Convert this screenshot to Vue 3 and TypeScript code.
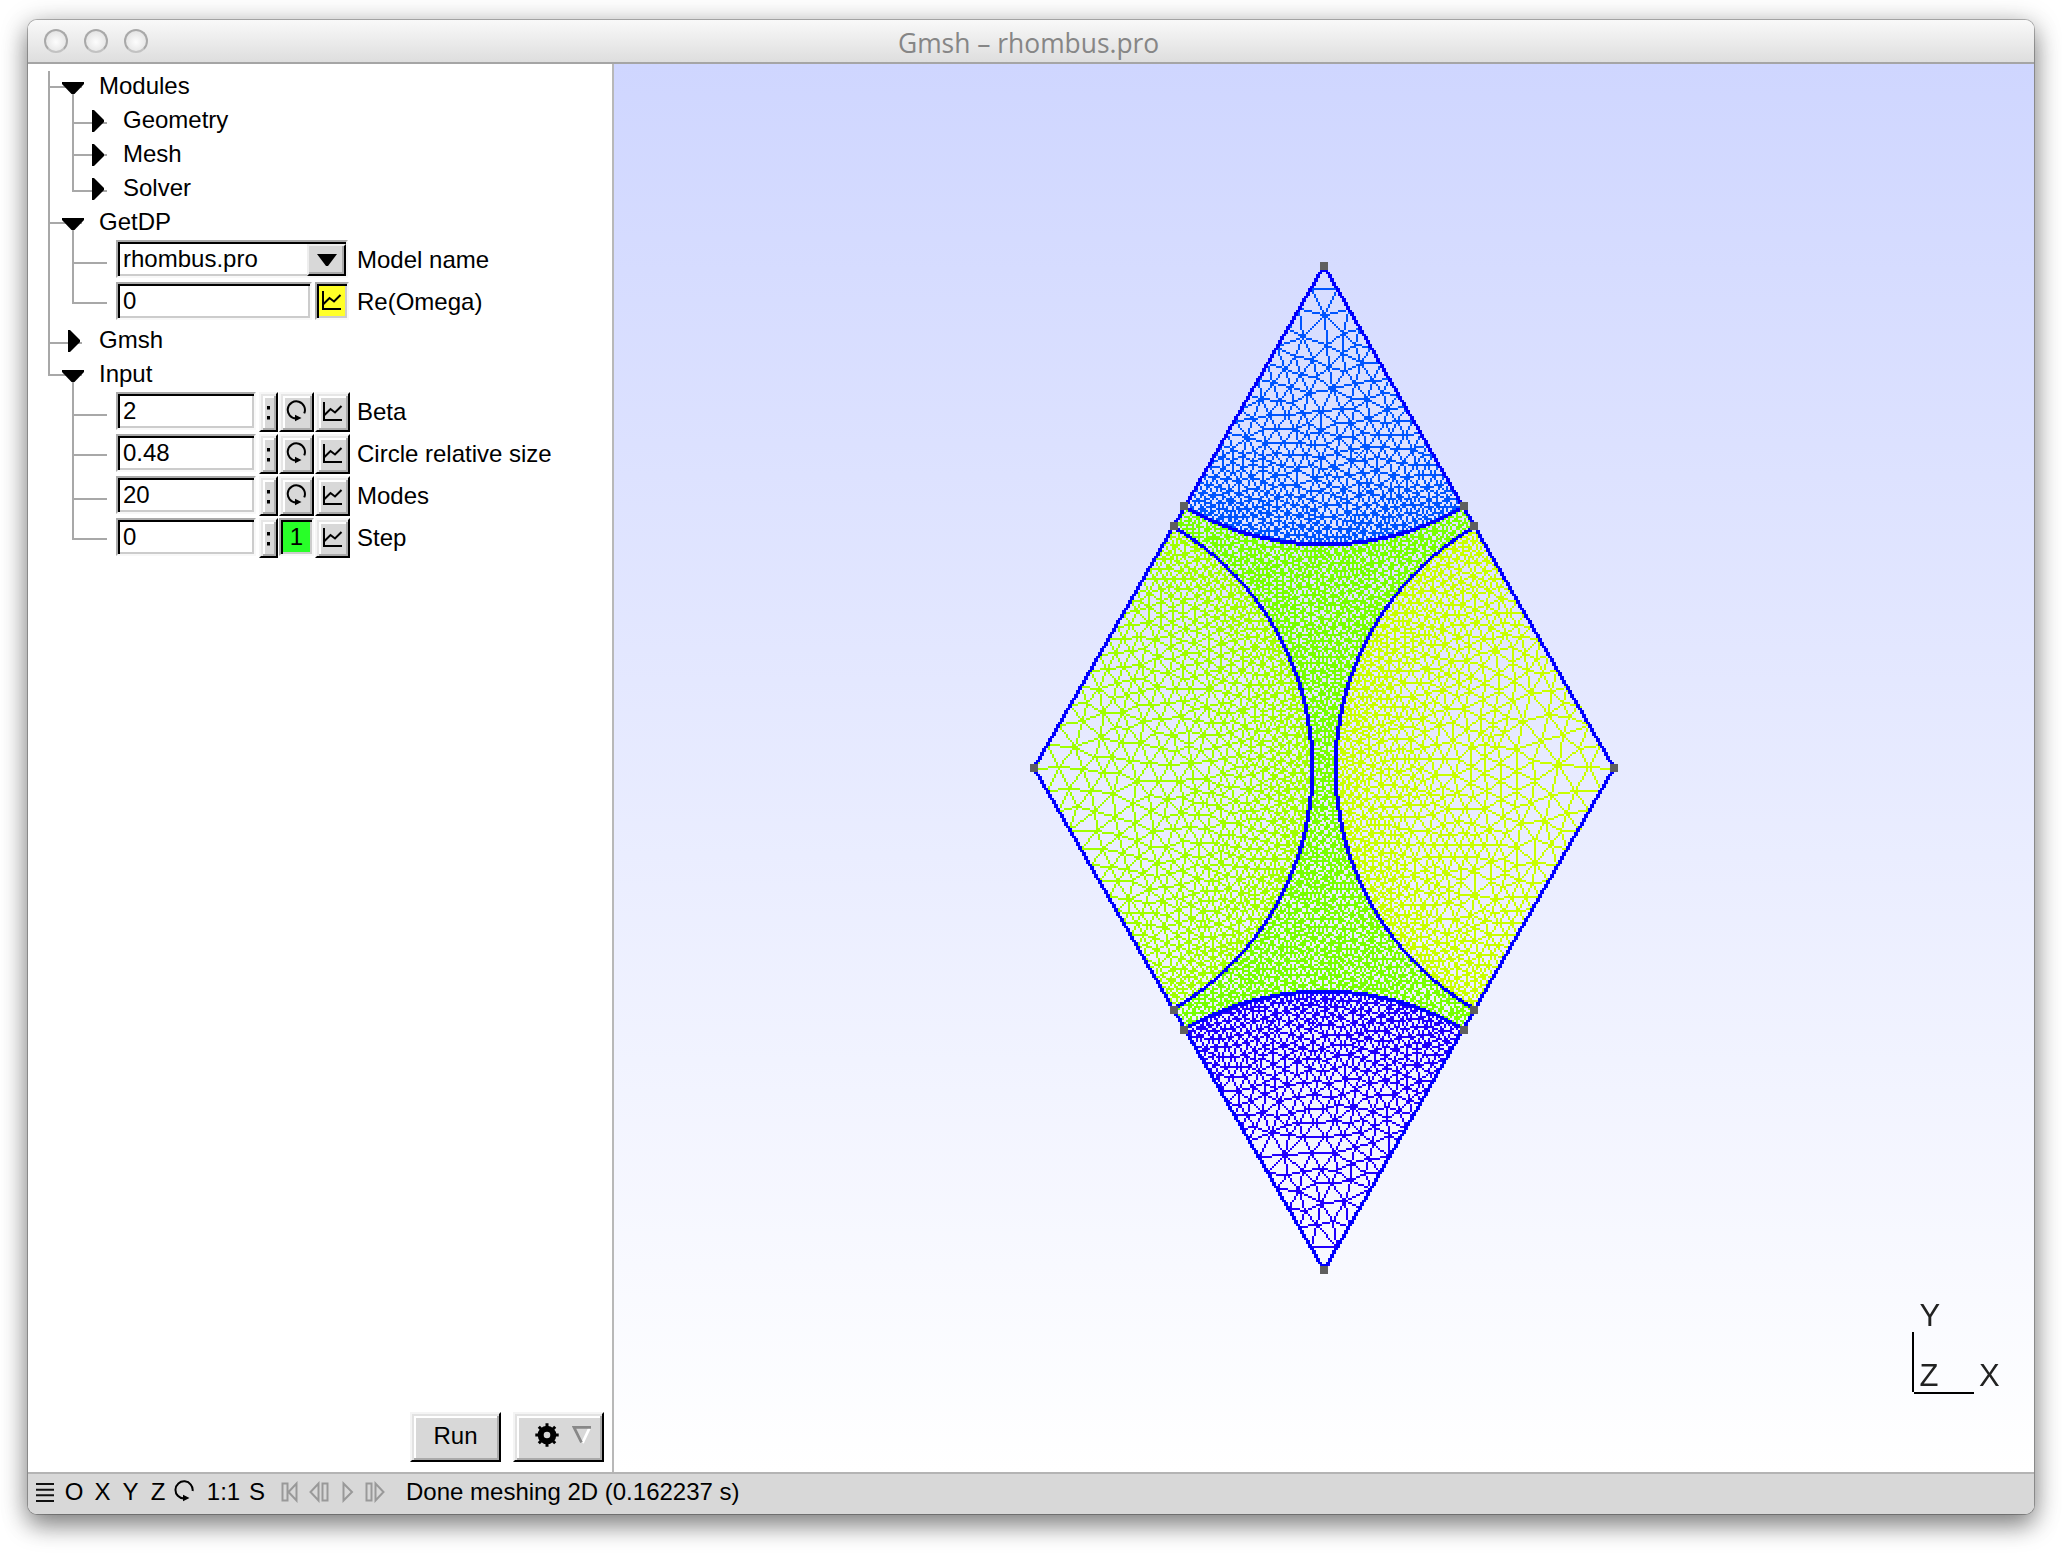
<script setup lang="ts">
import { onMounted, ref } from 'vue'

interface Param {
  value: string
  label: string
  kind: 'combo' | 'graph' | 'loop' | 'step'
}
interface Row {
  title?: string
  depth?: number
  open?: boolean
  param?: Param
}

const rows: Row[] = [
  { title: 'Modules', depth: 0, open: true },
  { title: 'Geometry', depth: 1 },
  { title: 'Mesh', depth: 1 },
  { title: 'Solver', depth: 1 },
  { title: 'GetDP', depth: 0, open: true },
  { param: { value: 'rhombus.pro', label: 'Model name', kind: 'combo' } },
  { param: { value: '0', label: 'Re(Omega)', kind: 'graph' } },
  { title: 'Gmsh', depth: 0 },
  { title: 'Input', depth: 0, open: true },
  { param: { value: '2', label: 'Beta', kind: 'loop' } },
  { param: { value: '0.48', label: 'Circle relative size', kind: 'loop' } },
  { param: { value: '20', label: 'Modes', kind: 'loop' } },
  { param: { value: '0', label: 'Step', kind: 'step' } },
]

// Tree connectors, relative to the tree's top left corner
const connectors = [
  'M21 1V306', 'M45 18V122', 'M45 154V234', 'M45 306V470',
  'M20 17H54', 'M44 53H79', 'M44 85H79', 'M44 121H79', 'M20 153H54',
  'M44 193H79', 'M44 233H79', 'M20 273H54', 'M20 305H54',
  'M44 345H79', 'M44 385H79', 'M44 429H79', 'M44 469H79',
].join('')

// ---- Mesh ----
type Pt = [number, number]
const W = 710
const H = 704
const C: Pt = [355, 352]
const HX = 145
const HY = 251
const R = 139.2
const TOP: Pt = [C[0], C[1] - HY]
const BOTTOM: Pt = [C[0], C[1] + HY]
const LEFT: Pt = [C[0] - HX, C[1]]
const RIGHT: Pt = [C[0] + HX, C[1]]
const FINE = 3.8
const COARSE = 12.8
const vertices: Pt[] = [TOP, RIGHT, BOTTOM, LEFT]
const colors = ['#0055ff', '#c8ff00', '#2000ff', '#a0ff00', '#78ff00']

let seed = 48271
const rnd = () => {
  seed = (seed * 16807) % 2147483647
  return seed / 2147483647
}
const dist = (a: Pt, b: Pt) => Math.hypot(a[0] - b[0], a[1] - b[1])
const region = (p: Pt) => {
  for (let i = 0; i < 4; i++) if (dist(p, vertices[i]) < R) return i
  return 4
}
const size = (p: Pt) => {
  let d = R
  for (const v of vertices) d = Math.min(d, dist(p, v))
  return COARSE + ((FINE - COARSE) * d) / R
}

// Incremental Delaunay triangulation over points sorted by x
function delaunay(pts: Pt[]): [number, number, number][] {
  const n = pts.length
  const order = pts.map((_, i) => i).sort((a, b) => pts[a][0] - pts[b][0])
  const all: Pt[] = pts.concat([[-6000, -4000], [355, 9000], [7000, -4000]])
  interface Tri { a: number; b: number; c: number; x: number; y: number; r: number }
  const make = (a: number, b: number, c: number): Tri => {
    const [ax, ay] = all[a]
    const bx = all[b][0] - ax, by = all[b][1] - ay
    const cx = all[c][0] - ax, cy = all[c][1] - ay
    const d = 2 * (bx * cy - by * cx) || 1e-12
    const b2 = bx * bx + by * by
    const c2 = cx * cx + cy * cy
    const ux = (cy * b2 - by * c2) / d
    const uy = (bx * c2 - cx * b2) / d
    return { a, b, c, x: ax + ux, y: ay + uy, r: ux * ux + uy * uy }
  }
  let open: Tri[] = [make(n, n + 1, n + 2)]
  const closed: Tri[] = []
  const K = n + 3
  for (const i of order) {
    const [px, py] = all[i]
    const edges = new Map<number, number>()
    const keep: Tri[] = []
    for (const t of open) {
      const dx = px - t.x
      if (dx > 0 && dx * dx > t.r) {
        closed.push(t)
        continue
      }
      const dy = py - t.y
      if (dx * dx + dy * dy > t.r) {
        keep.push(t)
        continue
      }
      for (const [u, v] of [[t.a, t.b], [t.b, t.c], [t.c, t.a]]) {
        const k = Math.min(u, v) * K + Math.max(u, v)
        edges.set(k, (edges.get(k) || 0) + 1)
      }
    }
    edges.forEach((count, k) => {
      if (count === 1) keep.push(make(Math.floor(k / K), k % K, i))
    })
    open = keep
  }
  return closed
    .concat(open)
    .filter((t) => t.a < n && t.b < n && t.c < n)
    .map((t) => [t.a, t.b, t.c] as [number, number, number])
}

function buildMesh() {
  const pts: Pt[] = []
  const jitter = (p: Pt): Pt => [p[0] + (rnd() - 0.5) * 0.01, p[1] + (rnd() - 0.5) * 0.01]

  // Sides of the rhombus, graded from each corner towards the arcs
  const stations = [0]
  for (let d = 0; ;) {
    d += COARSE + ((FINE - COARSE) * d) / R
    if (d > R - 2.5) break
    stations.push(d)
  }
  const side = dist(TOP, LEFT)
  for (let i = 0; i < 4; i++) {
    const a = vertices[i]
    for (const j of [(i + 1) % 4, (i + 3) % 4]) {
      const b = vertices[j]
      const at = (d: number): Pt => [a[0] + ((b[0] - a[0]) * d) / side, a[1] + ((b[1] - a[1]) * d) / side]
      for (const d of stations) if (d > 0 || j === (i + 1) % 4) pts.push(jitter(at(d)))
      pts.push(jitter(at(R)))
      if (j === (i + 1) % 4) {
        pts.push(jitter(at(side / 2 - 2)))
        pts.push(jitter(at(side / 2 + 2)))
      }
    }
  }
  // Arcs
  const half = [Math.atan2(HX, HY), Math.atan2(HY, HX)]
  const mid = [Math.PI / 2, Math.PI, -Math.PI / 2, 0]
  for (let i = 0; i < 4; i++) {
    const h = half[i % 2]
    const n = Math.round((2 * h * R) / FINE)
    for (let k = 1; k < n; k++) {
      const t = mid[i] - h + (2 * h * k) / n
      pts.push(jitter([vertices[i][0] + R * Math.cos(t), vertices[i][1] + R * Math.sin(t)]))
    }
  }
  const fixed = pts.length

  // Interior points at a spacing that follows the size field
  const cell = 4
  const cols = Math.ceil(W / cell)
  const grid = new Map<number, Pt[]>()
  const put = (p: Pt) => {
    const k = Math.floor(p[1] / cell) * cols + Math.floor(p[0] / cell)
    const g = grid.get(k)
    if (g) g.push(p)
    else grid.set(k, [p])
  }
  pts.forEach(put)
  for (let n = 0; n < 170000; n++) {
    const u = rnd(), v = rnd()
    const p: Pt = [C[0] + HX * (u - v), C[1] + HY * (u + v - 1)]
    const r = size(p) * 0.78
    const gx = Math.floor(p[0] / cell)
    const gy = Math.floor(p[1] / cell)
    const m = Math.ceil(r / cell)
    let ok = true
    for (let y = gy - m; ok && y <= gy + m; y++)
      for (let x = gx - m; ok && x <= gx + m; x++) {
        const g = grid.get(y * cols + x)
        if (g) for (const q of g) if (dist(p, q) < r) { ok = false; break }
      }
    if (ok) {
      pts.push(p)
      put(p)
    }
  }

  // Laplacian smoothing of the interior
  let tris = delaunay(pts)
  for (let pass = 0; pass < 3; pass++) {
    const sx = new Float64Array(pts.length)
    const sy = new Float64Array(pts.length)
    const c = new Float64Array(pts.length)
    for (const t of tris)
      for (let k = 0; k < 3; k++) {
        const i = t[k], j = t[(k + 1) % 3], l = t[(k + 2) % 3]
        sx[i] += pts[j][0] + pts[l][0]
        sy[i] += pts[j][1] + pts[l][1]
        c[i] += 2
      }
    for (let i = fixed; i < pts.length; i++) if (c[i]) pts[i] = [sx[i] / c[i], sy[i] / c[i]]
    tris = delaunay(pts)
  }
  return { pts, tris }
}

const canvas = ref<HTMLCanvasElement | null>(null)

onMounted(() => {
  const g = canvas.value?.getContext('2d')
  if (!g) return
  // One-pixel line between pixel centres
  const thin = (a: Pt, b: Pt) => {
    const x0 = Math.floor(a[0]), y0 = Math.floor(a[1])
    const dx = Math.floor(b[0]) - x0, dy = Math.floor(b[1]) - y0
    const n = Math.max(Math.abs(dx), Math.abs(dy))
    for (let i = 0; i <= n; i++)
      g.fillRect(Math.round(x0 + (n ? (dx * i) / n : 0)), Math.round(y0 + (n ? (dy * i) / n : 0)), 1, 1)
  }
  // Two-pixel line, widened along its minor axis
  const thick = (a: Pt, b: Pt) => {
    const m = Math.abs(b[1] - a[1]) > Math.abs(b[0] - a[0]) ? 1 : 0
    const [p, q] = a[m] < b[m] ? [a, b] : [b, a]
    for (let s = Math.floor(p[m]); s <= Math.floor(q[m]); s++) {
      const t = Math.min(Math.max((s + 0.5 - p[m]) / (q[m] - p[m] || 1), 0), 1)
      const o = Math.round(p[1 - m] + (q[1 - m] - p[1 - m]) * t) - 1
      if (m) g.fillRect(o, s, 2, 1)
      else g.fillRect(s, o, 1, 2)
    }
  }
  const { pts, tris } = buildMesh()
  for (const t of tris) {
    const [a, b, c] = t.map((i) => pts[i])
    const area = Math.abs((b[0] - a[0]) * (c[1] - a[1]) - (b[1] - a[1]) * (c[0] - a[0]))
    if (area < 1) continue
    g.fillStyle = colors[region([(a[0] + b[0] + c[0]) / 3, (a[1] + b[1] + c[1]) / 3])]
    thin(a, b)
    thin(b, c)
    thin(c, a)
  }

  g.fillStyle = '#0000ff'
  for (let i = 0; i < 4; i++) thick(vertices[i], vertices[(i + 1) % 4])
  const half = [Math.atan2(HX, HY), Math.atan2(HY, HX)]
  const mid = [Math.PI / 2, Math.PI, -Math.PI / 2, 0]
  const nodes: Pt[] = [...vertices]
  for (let i = 0; i < 4; i++) {
    const at = (t: number): Pt => [vertices[i][0] + R * Math.cos(t), vertices[i][1] + R * Math.sin(t)]
    const h = half[i % 2]
    const n = 44
    for (let k = 0; k < n; k++) thick(at(mid[i] - h + (2 * h * k) / n), at(mid[i] - h + (2 * h * (k + 1)) / n))
    nodes.push(at(mid[i] - h), at(mid[i] + h))
  }
  g.fillStyle = '#5f5f5f'
  for (const [x, y] of nodes) {
    const cy = y < C[1] ? Math.floor(y) : Math.ceil(y)
    g.fillRect(Math.round(x) - 2, cy - 2, 4, 4)
  }
})
</script>

<template>
  <div class="desktop">
    <div class="window">
      <header class="titlebar">
        <div class="lights"><i /><i /><i /></div>
        <div class="title">Gmsh – rhombus.pro</div>
      </header>

      <div class="main">
        <aside class="sidebar">
          <div class="tree">
            <svg class="lines" width="120" height="480"><path :d="connectors" /></svg>
            <div class="rows">
              <template v-for="(row, i) in rows" :key="i">
                <div v-if="row.title" class="node" :class="{ child: row.depth === 1 }">
                  <svg class="arrow" width="22" height="34">
                    <path v-if="row.open" d="M0 12H22V14L12.5 24H9.5L0 14Z" />
                    <path v-else d="M6 6H8L18 16V18L8 28H6Z" />
                  </svg>
                  <span>{{ row.title }}</span>
                </div>
                <div v-else-if="row.param" class="param">
                  <div class="widgets">
                    <div class="input">
                      <span>{{ row.param.value }}</span>
                      <div v-if="row.param.kind === 'combo'" class="drop">
                        <svg width="20" height="12"><path d="M0 0H20L11 12H9Z" /></svg>
                      </div>
                    </div>
                    <template v-if="row.param.kind === 'loop' || row.param.kind === 'step'">
                      <div class="btn range">
                        <svg width="4" height="18"><path d="M0 3H3V6.5H0ZM0 13H3V16.5H0Z" /></svg>
                      </div>
                      <div v-if="row.param.kind === 'loop'" class="btn loop">
                        <svg width="22" height="24" class="ico">
                          <path d="M18.2 13.4A8.6 8.6 0 1 0 10 18.5" />
                          <path class="fill" d="M9 14.8L15.5 18L9 21.2Z" />
                        </svg>
                      </div>
                      <div v-else class="btn down green">1</div>
                    </template>
                    <div
                      v-if="row.param.kind !== 'combo'"
                      class="btn graph"
                      :class="{ down: row.param.kind === 'graph', yellow: row.param.kind === 'graph' }"
                    >
                      <svg width="20" height="20" class="ico">
                        <path d="M1 0V18H19M1.5 13L7.5 7L12 10.5L18.5 4" />
                      </svg>
                    </div>
                  </div>
                  <span class="label">{{ row.param.label }}</span>
                </div>
              </template>
            </div>
          </div>

          <div class="actions">
            <div class="action">Run</div>
            <div class="action gear">
              <svg width="24" height="24" viewBox="-12 -12 24 24">
                <circle r="6.3" fill="none" stroke="#000" stroke-width="6" />
                <path
                  d="M0-11.7V-8M0 11.7V8M-11.7 0H-8M11.7 0H8M-8.2-8.2L-6-6M8.2 8.2L6 6M-8.2 8.2L-6 6M8.2-8.2L6-6"
                  stroke="#000"
                  stroke-width="3"
                />
              </svg>
              <svg width="20" height="20" fill="none" stroke-width="2.8">
                <path d="M17.5 3L10.5 18" stroke="#fff" />
                <path d="M19 2.4H2L9.5 17.5" stroke="#888" />
              </svg>
            </div>
          </div>
        </aside>

        <div class="viewport">
          <canvas ref="canvas" :width="W" :height="H" class="layer mesh" />
          <svg class="layer axes" width="1420" height="1408">
            <path d="M1299 1268V1328M1300 1329H1360" stroke="#000" stroke-width="2" />
            <text x="1305.5" y="1262">Y</text>
            <text x="1305.5" y="1322">Z</text>
            <text x="1365" y="1322">X</text>
          </svg>
        </div>
      </div>

      <footer class="status">
        <span style="width: 31px">
          <svg width="18" height="20"><path d="M0 2H18M0 7.7H18M0 13.3H18M0 19H18" stroke="#111" stroke-width="2" /></svg>
        </span>
        <span style="width: 28px">O</span>
        <span style="width: 29px">X</span>
        <span style="width: 27px">Y</span>
        <span style="width: 28px">Z</span>
        <span style="width: 26px">
          <svg width="22" height="24" class="ico">
            <path d="M18.6 11A8.6 8.6 0 1 0 10 18.5" />
            <path class="fill" d="M9 14.8L15.5 18L9 21.2Z" />
          </svg>
        </span>
        <span style="width: 51px">1:1</span>
        <span class="save" style="width: 16px">S</span>
        <span style="width: 29px">
          <svg width="18" height="22" class="play"><path d="M1.5 2.5H6.5V19.5H1.5ZM15.5 2.5V19.5L7.5 11Z" /></svg>
        </span>
        <span style="width: 30px">
          <svg width="20" height="22" class="play"><path d="M13.5 2.5H18.5V19.5H13.5ZM9.5 2.5V19.5L1.5 11Z" /></svg>
        </span>
        <span style="width: 28px">
          <svg width="12" height="22" class="play"><path d="M1.5 2.5V19.5L10 11Z" /></svg>
        </span>
        <span style="width: 26px">
          <svg width="20" height="22" class="play"><path d="M1.5 2.5H6.5V19.5H1.5ZM10.5 2.5V19.5L18.5 11Z" /></svg>
        </span>
        <span class="message">Done meshing 2D (0.162237 s)</span>
      </footer>
    </div>
  </div>
</template>

<style>
body {
  background: #fff;
  overflow: hidden;
}
</style>

<style scoped>
* {
  box-sizing: border-box;
}
.desktop {
  width: 2062px;
  height: 1554px;
  padding: 20px 28px 40px;
  background: #fff;
}
.window {
  display: flex;
  flex-direction: column;
  width: 2006px;
  height: 1494px;
  border-radius: 9px;
  background: #fff;
  overflow: hidden;
  box-shadow: 0 0 0 1px rgba(0, 0, 0, 0.25), 0 12px 24px rgba(0, 0, 0, 0.36), 0 4px 28px rgba(0, 0, 0, 0.28);
  font: 24px/32px 'Liberation Sans', Arial, sans-serif;
  color: #000;
}
.titlebar {
  display: flex;
  align-items: center;
  height: 44px;
  flex: none;
  border-bottom: 2px solid #a5a5a5;
  background: linear-gradient(#f9f9f9, #dedede);
}
.lights {
  display: flex;
  gap: 16px;
  width: 870px;
  padding-left: 16px;
}
.lights i {
  width: 24px;
  height: 24px;
  border: 2px solid #a9a9a9;
  border-bottom-color: #c2c2c2;
  border-radius: 50%;
  background: radial-gradient(circle at 50% 55%, #fdfdfd, #e9e9e9 60%, #dcdcdc);
}
.title {
  padding-top: 3px;
  font: 500 26.4px/38px 'Open Sans', 'Noto Sans', sans-serif;
  color: #868686;
  white-space: nowrap;
}
.main {
  display: flex;
  flex: 1;
  min-height: 0;
}
.sidebar {
  display: flex;
  flex-direction: column;
  justify-content: space-between;
  width: 586px;
  border-right: 2px solid #b8b8b8;
  padding-top: 6px;
}
.tree {
  display: grid;
}
.lines,
.rows {
  grid-area: 1 / 1;
}
.lines path {
  fill: none;
  stroke: #a8a8a8;
  stroke-width: 2;
}
.rows {
  position: relative;
}
.node {
  display: flex;
  gap: 15px;
  height: 34px;
  padding-left: 34px;
}
.node.child {
  padding-left: 58px;
}
.param {
  display: flex;
  align-items: flex-start;
  gap: 7px;
  height: 42px;
  padding-left: 88px;
}
.widgets {
  display: flex;
  gap: 1px;
  width: 234px;
}
.label {
  line-height: 40px;
}
.input {
  display: flex;
  justify-content: space-between;
  flex: 1;
  height: 38px;
  margin-right: 2px;
  padding-left: 5px;
  line-height: 33px;
  border: 2px solid;
  border-color: #aaa #f8f8f8 #f8f8f8 #aaa;
  box-shadow: inset 2px 2px 0 #000, inset -2px -2px 0 #ccc;
}
.drop {
  display: flex;
  align-items: center;
  justify-content: center;
  width: 39px;
  height: 32px;
  margin-top: 2px;
  background: #d8d8d8;
  border: 2px solid;
  border-color: #eee #000 #000 #eee;
  box-shadow: inset -2px -2px 0 #aaa;
}
.btn {
  display: flex;
  align-items: center;
  justify-content: center;
  width: 35px;
  height: 40px;
  background: #d8d8d8;
  border: 2px solid;
  border-color: #f6f6f6 #000 #000 #f6f6f6;
  box-shadow: inset 2px 2px 0 #e6e6e6, inset -2px -2px 0 #aaa, inset 4px 4px 0 #fff;
}
.range {
  width: 19px;
}
.down {
  height: 38px;
  border-color: #aaa #f8f8f8 #f8f8f8 #aaa;
  box-shadow: inset 2px 2px 0 #000, inset -2px -2px 0 #ccc;
}
.graph.down {
  width: 34px;
  margin-right: 1px;
}
.green {
  background: #28ff28;
}
.yellow {
  background: #ffff28;
}
.ico {
  fill: none;
  stroke: #000;
  stroke-width: 2;
}
.ico .fill {
  fill: #000;
  stroke: none;
}
.actions {
  display: flex;
  justify-content: flex-end;
  gap: 12px;
  padding: 0 8px 10px 0;
}
.action {
  display: flex;
  align-items: center;
  justify-content: center;
  width: 91px;
  height: 50px;
  padding-bottom: 2px;
  background: #d8d8d8;
  border: 2px solid;
  border-color: #f4f4f4 #000 #000 #f4f4f4;
  box-shadow: inset 2px 2px 0 #e2e2e2, inset -2px -2px 0 #aaa, inset 4px 4px 0 #fff;
}
.gear {
  justify-content: flex-start;
  gap: 13px;
  padding: 0 0 4px 20px;
}
.viewport {
  display: grid;
  flex: none;
  width: 1420px;
  height: 1408px;
  background: linear-gradient(#cfd6ff, #fff);
}
.layer {
  grid-area: 1 / 1;
}
.mesh {
  width: 1420px;
  height: 1408px;
  image-rendering: pixelated;
}
.axes {
  position: relative;
}
.axes text {
  font-size: 31px;
  fill: #222;
}
.status {
  display: flex;
  align-items: center;
  height: 42px;
  flex: none;
  padding: 0 0 5px 1px;
  border-top: 2px solid #b4b4b4;
  background: #d8d8d8;
}
.status span {
  display: flex;
  align-items: center;
  justify-content: center;
}
.status .save {
  margin-right: 10px;
}
.status .message {
  margin-left: 18px;
}
.play {
  fill: none;
  stroke: #999;
  stroke-width: 2;
}
</style>
